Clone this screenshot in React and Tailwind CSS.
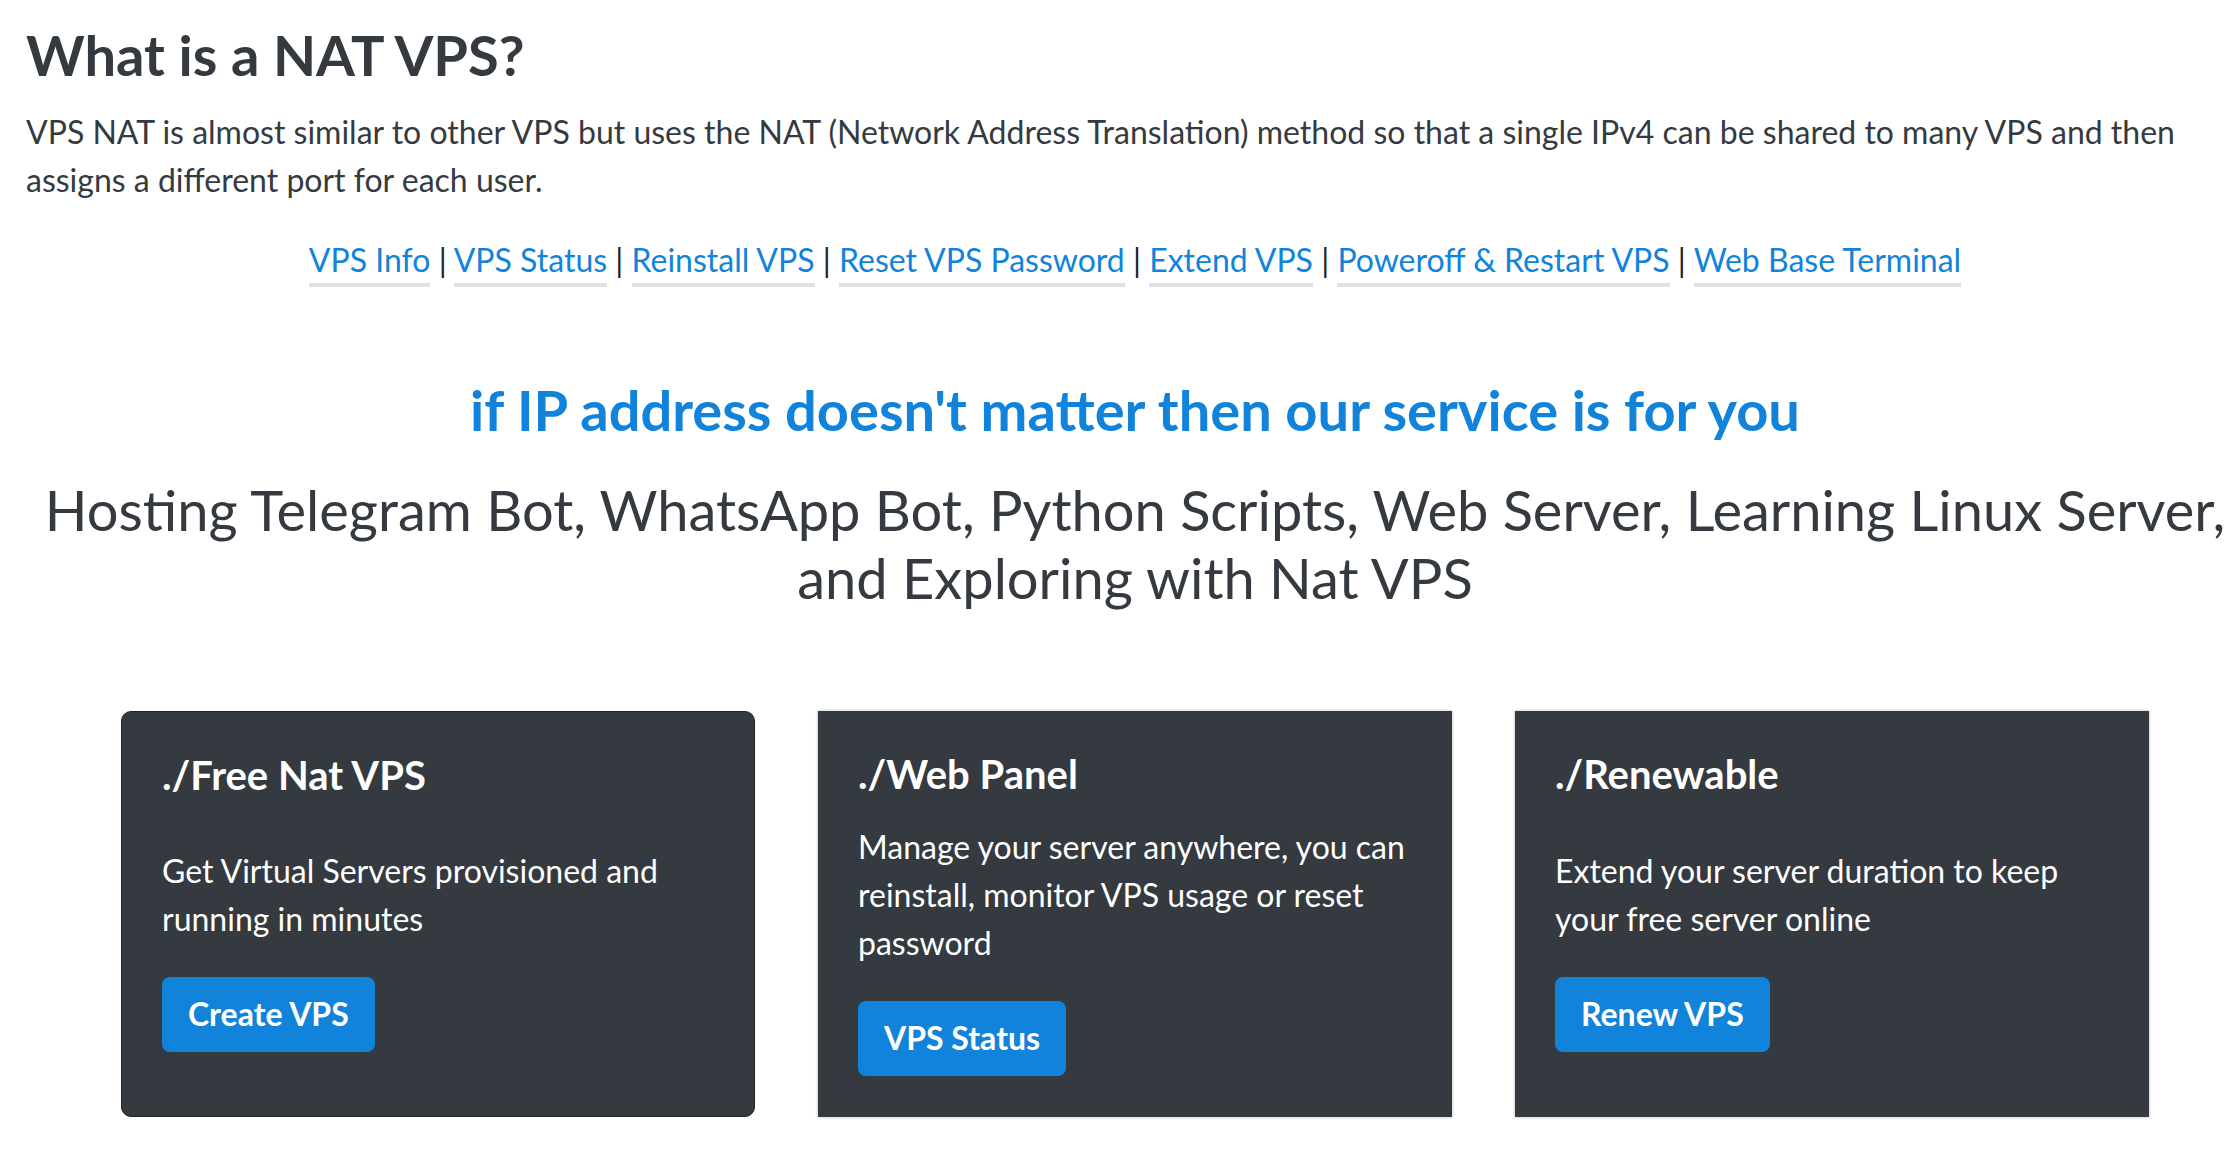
// eslint-disable-next-line no-unused-vars
import React from "react";

const panelLinks = [
  "VPS Info",
  "VPS Status",
  "Reinstall VPS",
  "Reset VPS Password",
  "Extend VPS",
  "Poweroff & Restart VPS",
  "Web Base Terminal",
];

const features = [
  {
    title: "./Free Nat VPS",
    text: "Get Virtual Servers provisioned and running in minutes",
    button: "Create VPS",
    active: true,
  },
  {
    title: "./Web Panel",
    text: "Manage your server anywhere, you can reinstall, monitor VPS usage or reset password",
    button: "VPS Status",
  },
  {
    title: "./Renewable",
    text: "Extend your server duration to keep your free server online",
    button: "Renew VPS",
  },
];

const FeatureCard = ({ feature }) => {
  return (
    <div
      className={`flex flex-col bg-[#343a40] pt-[39px] px-[40px] pb-[41px] ${
        feature.active
          ? "rounded-[10px] border border-[#1f2328]"
          : "shadow-[0_0_3px_rgba(0,0,0,0.3)]"
      }`}
    >
      <h4 className="text-[40px] font-bold leading-[1.2] text-white">
        {feature.title}
      </h4>
      <div className="mt-[25px] flex flex-1 flex-col justify-center">
        <p className="text-[32px] leading-[48px] text-white">{feature.text}</p>
        <button className="mt-[34px] h-[75px] self-start rounded-[8px] bg-[#1283da] px-[26px] text-[32px] font-bold text-white">
          {feature.button}
        </button>
      </div>
    </div>
  );
};

const App = () => {
  return (
    <div className="min-h-screen w-full overflow-hidden bg-white font-[Lato,sans-serif] text-[#343a40]">
      <div className="ml-[26px] w-[2218px] pt-[21px] pb-[40px]">
        <h2 className="mb-[20px] text-[56px] font-bold leading-[1.2]">
          What is a NAT VPS?
        </h2>
        <p className="mb-[32px] text-[32px] leading-[48px]">
          VPS NAT is almost similar to other VPS but uses the NAT (Network
          Address Translation) method so that a single IPv4 can be shared to
          many VPS and then assigns a different port for each user.
        </p>
        <p className="text-center text-[32px] leading-[48px] text-[#212529]">
          {panelLinks.map((label, i) => (
            <React.Fragment key={label}>
              {i > 0 && " | "}
              <a
                href="#"
                className="border-b-4 border-[#dee2e6] pb-[4px] text-[#1283da]"
              >
                {label}
              </a>
            </React.Fragment>
          ))}
        </p>

        <h2 className="mt-[92px] text-center text-[56px] font-bold leading-[1.2] text-[#1283da]">
          if IP address doesn't matter then our service is for you
        </h2>
        <h3 className="mt-[33px] text-center text-[56px] leading-[1.2]">
          Hosting Telegram Bot, WhatsApp Bot, Python Scripts, Web Server,
          Learning Linux Server, and Exploring with Nat VPS
        </h3>

        <div className="mt-[100px] grid grid-cols-[repeat(3,634px)] justify-center gap-[63px]">
          {features.map((feature) => (
            <FeatureCard key={feature.title} feature={feature} />
          ))}
        </div>
      </div>
    </div>
  );
};

export default App;
